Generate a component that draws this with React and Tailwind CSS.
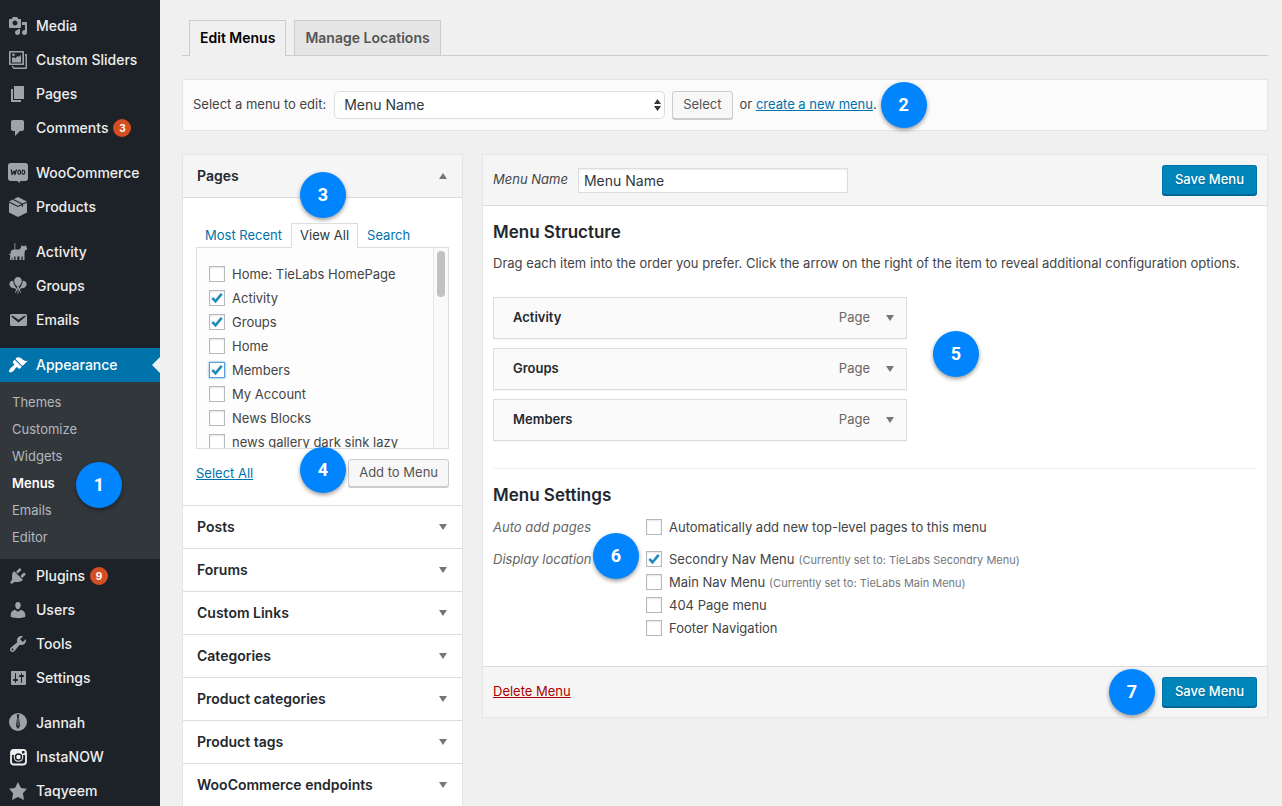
import { useState } from "react"

const menuItems = [
  { name: "Media", icon: "media" },
  { name: "Custom Sliders", icon: "sliders" },
  { name: "Pages", icon: "pages" },
  { name: "Comments", icon: "comments", count: 3 },
  { name: "WooCommerce", icon: "woo", gap: true },
  { name: "Products", icon: "products" },
  { name: "Activity", icon: "activity", gap: true },
  { name: "Groups", icon: "groups" },
  { name: "Emails", icon: "emails" },
  { name: "Appearance", icon: "appearance", gap: true, current: true },
  { name: "Plugins", icon: "plugins", count: 9 },
  { name: "Users", icon: "users" },
  { name: "Tools", icon: "tools" },
  { name: "Settings", icon: "settings" },
  { name: "Jannah", icon: "jannah", gap: true },
  { name: "InstaNOW", icon: "insta" },
  { name: "Taqyeem", icon: "star" },
]

const submenu = ["Themes", "Customize", "Widgets", "Menus", "Emails", "Editor"]

const pages = [
  { name: "Home: TieLabs HomePage" },
  { name: "Activity", checked: true },
  { name: "Groups", checked: true },
  { name: "Home" },
  { name: "Members", checked: true, focused: true },
  { name: "My Account" },
  { name: "News Blocks" },
  { name: "news gallery dark sink lazy" },
]

const sections = [
  "Posts",
  "Forums",
  "Custom Links",
  "Categories",
  "Product categories",
  "Product tags",
  "WooCommerce endpoints",
]

const locations = [
  { name: "Secondry Nav Menu", note: "(Currently set to: TieLabs Secondry Menu)", checked: true },
  { name: "Main Nav Menu", note: "(Currently set to: TieLabs Main Menu)" },
  { name: "404 Page menu" },
  { name: "Footer Navigation" },
]

const icons = {
  media: (
    <path d="M13 11V4c0-.55-.45-1-1-1h-1.67L9 1H5L3.67 3H2c-.55 0-1 .45-1 1v7c0 .55.45 1 1 1h10c.55 0 1-.45 1-1zM7 4.5c1.38 0 2.5 1.12 2.5 2.5S8.38 9.5 7 9.5 4.5 8.38 4.5 7 5.62 4.5 7 4.5zM14 6h5v10.5c0 1.38-1.12 2.5-2.5 2.5S14 17.88 14 16.5s1.12-2.5 2.5-2.5c.17 0 .34.02.5.05V9h-3V6zm-4 8.05V13h2v3.5c0 1.38-1.12 2.5-2.5 2.5S7 17.88 7 16.5 8.12 14 9.5 14c.17 0 .34.02.5.05z" />
  ),
  sliders: (
    <>
      <path
        fillRule="evenodd"
        d="M2 1h13c.6 0 1 .4 1 1v12c0 .6-.4 1-1 1H2c-.6 0-1-.4-1-1V2c0-.6.4-1 1-1zm.6 1.6v10.8h11.800V2.600z"
      />
      <path d="M4 12.500V8l2-1 1.500 1.500L9.500 6l1.500 1 2-2.500v8zM5.500 3.500a1.300 1.300 0 1 1 0 2.600 1.300 1.300 0 0 1 0-2.600z" />
      <path d="M17 4h2v14c0 .6-.4 1-1 1H5v-1.500H4V16h1.500v1.500H17.500V5.500H17z" />
    </>
  ),
  pages: <path d="M6 15V2h10v13H6zm-1 1h8v2H3V5h2v11z" />,
  comments: (
    <path d="M5 2h9c1.100 0 2 .9 2 2v7c0 1.100-.9 2-2 2h-2l-5 5v-5H5c-1.100 0-2-.9-2-2V4c0-1.100.9-2 2-2z" />
  ),
  woo: (
    <>
      <path d="M2.500 0h15C19 0 20 1 20 2.500v13c0 1.500-1 2.500-2.500 2.500H12v2l-3-2H2.500C1 18 0 17 0 15.500v-13C0 1 1 0 2.500 0z" />
      <path
        d="M3.200 6.800l1 4.700 1.900-3.500.8 3.500 1.500-4.700"
        fill="none"
        stroke="#1d2228"
        strokeWidth="1.300"
        strokeLinejoin="round"
        strokeLinecap="round"
      />
      <ellipse cx="11.200" cy="9.200" rx="1.400" ry="2" fill="none" stroke="#1d2228" strokeWidth="1.200" />
      <ellipse cx="15.400" cy="9.200" rx="1.400" ry="2" fill="none" stroke="#1d2228" strokeWidth="1.200" />
    </>
  ),
  products: (
    <>
      <path d="M10 0l9 4.500v11L10 20l-9-4.500v-11z" />
      <path d="M1 5l9 4.500L19 5M5.300 2.600l9 4.500v3" fill="none" stroke="#1d2228" strokeWidth="1.100" />
    </>
  ),
  activity: (
    <path d="M6.500 1h.8v6.500h4.200L13 5.500 13.500 3l1.200 1h2.200l1.200-1 .4 2.500.7.7-.4 1.500-1.800.5-.5 3V18h-1.800v-3.500h-1.300V18h-1.900v-3.500H9.300V18H7.500v-3.500H6.200V18H4.400v-3.500L3.300 18H1.800l.7-4.500-1.400-.8.600-1.200 1.100.3V9.300l1.500-1.500h2.200z" />
  ),
  groups: (
    <>
      <path d="M10 1c2.300 0 3.800 1.700 3.800 4 0 2.200-1.500 4.500-3.200 5.600L13 16.500l-.6.400-2-4.500V18h-.8v-5.600l-2 4.500-.6-.4 2.400-5.900C7.700 9.500 6.200 7.200 6.200 5c0-2.300 1.500-4 3.800-4z" />
      <path d="M5.300 4.800c-2.400-.2-3.900 1.300-3.900 3.100 0 2.700 2.800 4.600 5.500 4.400L9 15l.4-.4-1.600-3.400c-1.300-1.500-2.500-3.800-2.500-6.400zM14.700 4.800c2.400-.2 3.900 1.300 3.900 3.100 0 2.700-2.800 4.600-5.500 4.400L11 15l-.4-.4 1.600-3.400c1.300-1.500 2.500-3.800 2.500-6.400z" />
    </>
  ),
  emails: (
    <path d="M3.870 4h13.250C18.370 4 19 4.590 19 5.790v8.420c0 1.190-.63 1.790-1.880 1.790H3.870c-1.250 0-1.880-.6-1.880-1.790V5.790c0-1.200.63-1.790 1.880-1.790zm6.620 8.600l6.740-5.530c.24-.2.430-.66.130-1.070-.29-.41-.82-.42-1.170-.17l-5.700 3.860L4.800 5.830c-.35-.25-.88-.24-1.170.17-.3.410-.11.870.13 1.070z" />
  ),
  appearance: (
    <path d="M14.480 11.060L7.410 3.990l1.500-1.500c.5-.56 2.300-.47 3.510.32 1.210.8 1.430 1.280 2.910 2.100 1.180.64 2.450 1.260 4.450.85zm-.71.71L6.700 4.700 4.930 6.470c-.39.39-.39 1.020 0 1.410l1.060 1.060c.39.39.39 1.030 0 1.420-.6.6-1.430 1.110-2.210 1.690-.35.26-.7.53-1.010.84C1.430 14.230.4 16.080 1.400 17.070c.99 1 2.840-.03 4.180-1.360.31-.31.58-.66.85-1.020.57-.78 1.080-1.610 1.690-2.210.39-.39 1.020-.39 1.410 0l1.060 1.060c.39.39 1.020.39 1.410 0z" />
  ),
  plugins: (
    <path d="M13.110 4.360L9.870 7.600 8 5.730l3.240-3.240c.35-.34 1.050-.2 1.560.32.52.51.66 1.210.31 1.550zm-8 1.770l.91-1.120 9.010 9.010-1.190.84c-.71.71-2.630 1.160-3.820 1.160H6.140L4.900 17.260c-.59.59-1.540.59-2.120 0-.59-.58-.59-1.530 0-2.120l1.240-1.240v-3.880c0-1.130.4-3.190 1.090-3.890zm7.260 3.970l3.240-3.240c.34-.35 1.040-.21 1.550.31.52.51.66 1.210.31 1.550l-3.240 3.250z" />
  ),
  users: (
    <path d="M10 9.250c-2.270 0-2.730-3.440-2.730-3.440C7 4.020 7.820 2 9.970 2c2.160 0 2.980 2.020 2.710 3.810 0 0-.41 3.440-2.680 3.440zm0 2.570L12.720 10c2.390 0 4.520 2.330 4.520 4.530v2.490s-3.650 1.130-7.240 1.130c-3.650 0-7.240-1.130-7.240-1.130v-2.490c0-2.250 1.940-4.480 4.470-4.480z" />
  ),
  tools: (
    <path d="M16.680 9.770c-1.340 1.340-3.300 1.670-4.950.99l-5.410 6.520c-.99.99-2.590.99-3.580 0s-.99-2.590 0-3.570l6.520-5.420c-.68-1.650-.35-3.610.99-4.950 1.280-1.280 3.120-1.620 4.720-1.060l-2.890 2.890 2.820 2.820 2.860-2.870c.53 1.580.18 3.390-1.080 4.650zM3.810 16.210c.4.39 1.040.39 1.430 0 .4-.4.4-1.040 0-1.430-.39-.4-1.030-.4-1.430 0-.39.39-.39 1.030 0 1.430z" />
  ),
  settings: (
    <path d="M18 16V4c0-.55-.45-1-1-1H4c-.55 0-1 .45-1 1v12c0 .55.45 1 1 1h13c.55 0 1-.45 1-1zM8 11h1c.55 0 1 .45 1 1s-.45 1-1 1H8v1.500c0 .28-.22.5-.5.5s-.5-.22-.5-.5V13H6c-.55 0-1-.45-1-1s.45-1 1-1h1V5.500c0-.28.22-.5.5-.5s.5.22.5.5V11zm5-2h-1c-.55 0-1-.45-1-1s.45-1 1-1h1V5.500c0-.28.22-.5.5-.5s.5.22.5.5V7h1c.55 0 1 .45 1 1s-.45 1-1 1h-1v5.500c0 .28-.22.5-.5.5s-.5-.22-.5-.5V9z" />
  ),
  jannah: (
    <>
      <circle cx="10" cy="9" r="9" />
      <path d="M8.600 1.500h2.800L10.800 4l1.200 9-2 3-2-3 1.200-9z" fill="#1d2228" />
      <path d="M10 5v8" stroke="#9ea3a8" strokeWidth=".8" />
    </>
  ),
  insta: (
    <>
      <rect x="3" y="3" width="15" height="14.500" rx="3" fill="none" stroke="#f0f1f1" strokeWidth="1.800" />
      <path d="M3 4.500C3 3.500 4 2.500 5 2.500h11c1.200 0 2 .9 2 2V8H3z" fill="#f0f1f1" />
      <circle cx="10.500" cy="10" r="4.800" fill="#f0f1f1" />
      <circle cx="10.500" cy="10" r="3" fill="none" stroke="#1d2228" strokeWidth="1.500" />
      <rect x="14" y="4" width="2.500" height="2.500" fill="#1d2228" />
    </>
  ),
  star: <path d="M10 1l3 6 6 .75-4.120 4.620L16 19l-6-3-6 3 1.130-6.630L1 7.750 7 7z" />,
}

function Step({ n, className }) {
  return (
    <span
      className={`flex size-[46px] shrink-0 items-center justify-center rounded-full bg-[#0085ff] font-['Roboto',sans-serif] text-lg font-bold text-white shadow-[0_2px_4px_rgba(0,0,0,0.4)] ${className}`}
    >
      {n}
    </span>
  )
}

function Arrow({ up }) {
  return (
    <svg className="h-[6px] w-2 shrink-0 fill-[#72777c]" viewBox="0 0 8 6" aria-hidden="true">
      {up ? <path d="M0 6l4-6 4 6z" /> : <path d="M0 0h8L4 6z" />}
    </svg>
  )
}

function Checkbox({ label, note, checked, focused }) {
  return (
    <label className="flex items-center gap-[7px]">
      <span className="relative flex size-4 shrink-0">
        <input
          type="checkbox"
          defaultChecked={checked}
          className={`peer size-4 appearance-none border bg-white ${
            focused
              ? "border-[#5b9dd9] shadow-[0_0_2px_rgba(30,140,190,0.8)]"
              : "border-[#b4b9be] shadow-[inset_0_1px_2px_rgba(0,0,0,0.1)]"
          }`}
        />
        <svg
          className="pointer-events-none absolute inset-0 hidden size-4 peer-checked:block"
          viewBox="0 0 16 16"
          fill="none"
          stroke="#1e8cbe"
          strokeWidth="2.600"
          aria-hidden="true"
        >
          <path d="M3.300 7.800l3.200 3.500 6.200-7.500" />
        </svg>
      </span>
      <span className="whitespace-nowrap">
        {label}
        {note && <small className="ml-1 text-[11px] text-[#72777c]">{note}</small>}
      </span>
    </label>
  )
}

function Button({ children, className }) {
  return (
    <button
      className={`h-7 rounded-[3px] border border-[#ccc] bg-[#f7f7f7] px-[10px] text-[#555] shadow-[0_1px_0_#ccc] ${className}`}
    >
      {children}
    </button>
  )
}

function SaveButton() {
  return (
    <button className="h-[30px] rounded-[3px] border border-[#0073aa] border-b-[#006799] bg-[#0085ba] px-3 font-medium text-white shadow-[0_1px_0_#006799] text-shadow-[0_1px_1px_#006799]">
      Save Menu
    </button>
  )
}

function Sidebar() {
  return (
    <nav className="w-40 shrink-0 bg-[#1d2228] pt-[9px] text-sm font-medium text-[#eee]">
      <ul>
        {menuItems.map((item) => (
          <li key={item.name} className={item.gap ? "mt-[11px]" : ""}>
            <a
              href="#"
              className={`relative flex h-[34px] items-center gap-2 pl-2 ${
                item.current ? "bg-[#0073aa] text-white" : ""
              }`}
            >
              <svg
                className={`size-5 shrink-0 ${item.current ? "fill-white" : "fill-[#9ea3a8]"}`}
                viewBox="0 0 20 20"
                aria-hidden="true"
              >
                {icons[item.icon]}
              </svg>
              {item.name}
              {item.count && (
                <span className="-ml-[3px] flex size-[18px] items-center justify-center rounded-full bg-[#d54e21] text-[10px] font-bold text-white">
                  {item.count}
                </span>
              )}
              {item.current && (
                <span className="absolute right-0 border-8 border-l-0 border-transparent border-r-[#f0f0f0]" />
              )}
            </a>

            {item.current && (
              <ul className="relative bg-[#32373c] pt-[7px] pb-2 text-[13px] text-[#b4b9be]">
                {submenu.map((sub) => (
                  <li key={sub}>
                    <a
                      href="#"
                      className={`flex h-[27px] items-center pl-3 ${
                        sub === "Menus" ? "font-semibold text-white" : "font-normal"
                      }`}
                    >
                      {sub}
                    </a>
                  </li>
                ))}
                <Step n={1} className="absolute top-20 left-[76px]" />
              </ul>
            )}
          </li>
        ))}
      </ul>
    </nav>
  )
}

function AddItems() {
  return (
    <div className="w-[281px] shrink-0 border border-[#e5e5e5] bg-white">
      <div className="relative flex h-[43px] items-center justify-between border-b border-[#ddd] bg-[#f5f5f5] pr-[15px] pl-[14px]">
        <h3 className="text-sm font-semibold text-[#23282d]">Pages</h3>
        <Arrow up />
        <Step n={3} className="absolute top-[17px] left-[117px]" />
      </div>

      <div className="px-[13px] pt-[25px] pb-[17px]">
        <div className="flex h-6 text-[#0073aa]">
          <a href="#" className="px-[9px] pt-[3px]">Most Recent</a>
          <a
            href="#"
            className="relative z-10 -mb-px border border-b-0 border-[#ddd] bg-[#fdfdfd] px-2 pt-[2px] text-[#32373c]"
          >
            View All
          </a>
          <a href="#" className="px-[9px] pt-[3px]">Search</a>
        </div>

        <div className="flex h-[202px] border border-[#ddd] bg-[#fdfdfd]">
          <div className="flex flex-1 flex-col gap-2 overflow-hidden pt-[18px] pl-3 leading-4">
            {pages.map((page) => (
              <Checkbox key={page.name} label={page.name} checked={page.checked} focused={page.focused} />
            ))}
          </div>
          <div className="w-[15px] border-l border-[#e8e8e8] bg-[#fafafa] px-[3px] pt-[3px]">
            <div className="h-[46px] rounded-full bg-[#c1c1c1]" />
          </div>
        </div>

        <div className="mt-[10px] flex items-center justify-between">
          <a href="#" className="text-[#0073aa] underline">Select All</a>
          <div className="relative">
            <Step n={4} className="absolute top-[-12px] right-[103px]" />
            <Button className="mb-px block">Add to Menu</Button>
          </div>
        </div>
      </div>

      {sections.map((section) => (
        <div key={section} className="flex h-[43px] items-center justify-between border-t border-[#ddd] pr-[15px] pl-[14px]">
          <h3 className="text-sm font-semibold text-[#23282d]">{section}</h3>
          <Arrow />
        </div>
      ))}
    </div>
  )
}

function MenuEditor() {
  const [name, setName] = useState("Menu Name")

  return (
    <div className="min-w-0 flex-1 border border-[#e5e5e5] bg-white">
      <div className="flex h-[51px] items-center justify-between border-b border-[#ddd] bg-[#f5f5f5] px-[10px]">
        <label className="flex items-center gap-[10px] italic">
          Menu Name
          <input
            className="h-[25px] w-[270px] border border-[#ddd] bg-white px-[5px] text-sm text-[#32373c] not-italic shadow-[inset_0_1px_2px_rgba(0,0,0,0.07)]"
            value={name}
            onChange={(e) => setName(e.target.value)}
          />
        </label>
        <SaveButton />
      </div>

      <div className="px-[10px] pt-4">
        <h3 className="text-[17px] leading-5 font-semibold text-[#23282d]">Menu Structure</h3>
        <p className="mt-[11px] leading-5 whitespace-nowrap">
          Drag each item into the order you prefer. Click the arrow on the right of the item to reveal
          additional configuration options.
        </p>

        <div className="relative mt-6 w-[414px]">
          <ul className="flex flex-col gap-[9px]">
            {["Activity", "Groups", "Members"].map((item) => (
              <li
                key={item}
                className="flex h-[42px] items-center border border-[#ddd] bg-[#fafafa] pr-3 pl-[19px] shadow-[0_1px_1px_rgba(0,0,0,0.04)]"
              >
                <span className="flex-1 font-semibold text-[#23282d]">{item}</span>
                <span className="mr-4 text-[#666]">Page</span>
                <Arrow />
              </li>
            ))}
          </ul>
          <Step n={5} className="absolute top-[34px] left-[440px]" />
        </div>

        <hr className="mt-[27px] border-[#eee]" />

        <h3 className="mt-4 text-[17px] leading-5 font-semibold text-[#23282d]">Menu Settings</h3>

        <div className="mt-3 flex leading-5">
          <span className="w-[153px] text-[#666] italic">Auto add pages</span>
          <Checkbox label="Automatically add new top-level pages to this menu" />
        </div>
        <div className="relative mt-3 flex leading-5">
          <span className="w-[153px] text-[#666] italic">Display location</span>
          <div className="grid auto-rows-[20px] gap-[3px]">
            {locations.map((loc) => (
              <Checkbox key={loc.name} label={loc.name} note={loc.note} checked={loc.checked} />
            ))}
          </div>
          <Step n={6} className="absolute top-[-16px] left-[100px]" />
        </div>
      </div>

      <div className="mt-7 flex h-[51px] items-center border-t border-[#ddd] bg-[#f5f5f5] px-[10px]">
        <a href="#" className="mr-auto text-[#a00] underline">Delete Menu</a>
        <Step n={7} className="mr-[7px]" />
        <SaveButton />
      </div>
    </div>
  )
}

export default function App() {
  return (
    <div className="flex h-screen overflow-hidden bg-[#f0f0f0] font-['Inter',sans-serif] text-[13px] text-[#444]">
      <Sidebar />

      <main className="min-w-0 flex-1 pt-5 pr-[14px] pl-[22px]">
        {/* Tabs */}
        <div className="flex gap-2 border-b border-[#ccc] pl-[7px] text-sm leading-6 font-semibold">
          <a href="#" className="-mb-px border border-b-0 border-[#ccc] bg-[#f0f0f0] px-[10px] pt-[5px] pb-[6px] text-black">
            Edit Menus
          </a>
          <a href="#" className="border border-b-0 border-[#ccc] bg-[#e5e5e5] px-[10px] py-[5px] text-[#555]">
            Manage Locations
          </a>
        </div>

        {/* Menu picker */}
        <div className="mt-[23px] flex h-[52px] items-center border border-[#e5e5e5] bg-[#fbfbfb] px-[10px]">
          <label htmlFor="menu">Select a menu to edit:</label>
          <div className="relative ml-2">
            <select
              id="menu"
              className="block h-7 w-[331px] appearance-none rounded-[5px] border border-[#ddd] bg-white px-[9px] text-sm text-[#32373c]"
            >
              <option>Menu Name</option>
            </select>
            <svg
              className="pointer-events-none absolute top-2 right-1 h-3 w-[7px] fill-[#32373c]"
              viewBox="0 0 7 12"
              aria-hidden="true"
            >
              <path d="M0 5l3.500-5L7 5zM0 7h7l-3.500 5z" />
            </svg>
          </div>
          <Button className="ml-[7px]">Select</Button>
          <span className="ml-[7px]">
            or <a href="#" className="text-[#0073aa] underline">create a new menu</a>.
          </span>
          <Step n={2} className="ml-1" />
        </div>

        <div className="mt-[23px] flex items-start gap-[19px]">
          <AddItems />
          <MenuEditor />
        </div>
      </main>
    </div>
  )
}
